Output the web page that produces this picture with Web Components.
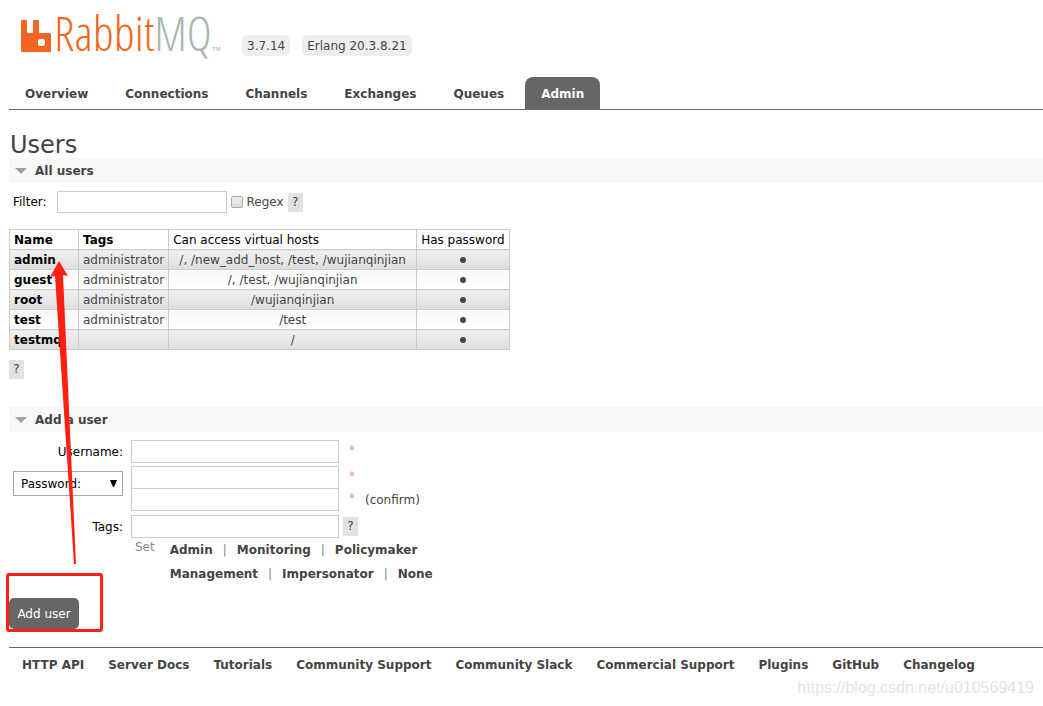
<!DOCTYPE html>
<html lang="en">
<head>
<meta charset="utf-8">
<title>RabbitMQ Management</title>
<style>
  body { margin: 0; background: #fff; color: #444; font: 12px/16px Verdana, "DejaVu Sans", sans-serif; }
</style>
</head>
<body>
<rmq-app>
  <rmq-header slot="header" version="3.7.14" erlang="Erlang 20.3.8.21"></rmq-header>
  <rmq-tabs slot="header" items="Overview,Connections,Channels,Exchanges,Queues,Admin" current="Admin"></rmq-tabs>
  <rmq-section heading="All users"><users-panel></users-panel></rmq-section>
  <rmq-section heading="Add a user"><add-user-form></add-user-form></rmq-section>
  <rmq-footer slot="footer" items="HTTP API,Server Docs,Tutorials,Community Support,Community Slack,Commercial Support,Plugins,GitHub,Changelog"></rmq-footer>
</rmq-app>

<script>
function define(name, render) {
  customElements.define(name, class extends HTMLElement {
    constructor() {
      super();
      this.attachShadow({ mode: 'open' });
    }
    connectedCallback() {
      this.shadowRoot.innerHTML = render(this);
    }
  });
}

define('rmq-app', () => `
  <style>
    :host { display: block; position: relative; padding-left: 9px; }
    h1 { margin: 22px 0 0; padding-left: 1px; font-size: 24px; line-height: 26px; font-weight: normal; }
    .arrow { position: absolute; left: 48px; top: 260px; pointer-events: none; }
    .box { position: absolute; left: 6px; top: 573px; width: 91px; height: 53px; border: 3px solid #ff2012; border-radius: 3px; pointer-events: none; }
    .mark { position: absolute; right: 9px; bottom: 1px; font: 16px/20px "Liberation Sans", Arial, sans-serif; color: #e4e4e4; }
  </style>
  <slot name="header"></slot>
  <main>
    <h1>Users</h1>
    <slot></slot>
  </main>
  <slot name="footer"></slot>
  <svg class="arrow" width="30" height="306" viewBox="0 0 30 306" aria-hidden="true">
    <path fill="#ff2012" d="M11 1 20 16 15 15 28 304 26 304 7 16 2 17Z"/>
  </svg>
  <div class="box"></div>
  <div class="mark">https://blog.csdn.net/u010569419</div>
`);

define('rmq-header', el => `
  <style>
    :host { display: flex; align-items: flex-end; height: 56px; padding-left: 12px; gap: 12px; }
    .logo { display: flex; align-items: flex-end; width: 209px; height: 56px; color: #f36621; text-decoration: none; }
    .logo svg { flex: none; margin: 0 3px 4px 0; }
    .name { font: 300 48px/46px "Open Sans Condensed Light", "Roboto Condensed Light", "Liberation Sans Narrow", "Open Sans Condensed", sans-serif; white-space: nowrap; }
    .mq { color: #a9b5ae; }
    .tm { font: 6px/8px "Liberation Sans", sans-serif; color: #a9b5ae; margin-bottom: 3px; }
    .tag { background: #eee; border-radius: 5px; padding: 3px 5px 2px; line-height: 16px; white-space: nowrap; }
  </style>
  <a class="logo" href="#/">
    <svg width="30" height="32" viewBox="0 0 30 32" aria-hidden="true">
      <path fill="#f36621" fill-rule="evenodd" d="M1 0h4a1 1 0 0 1 1 1v11a1 1 0 0 0 1 1h4a1 1 0 0 0 1-1V1a1 1 0 0 1 1-1h4a1 1 0 0 1 1 1v11a1 1 0 0 0 1 1h10a1 1 0 0 1 1 1v17a1 1 0 0 1-1 1H1a1 1 0 0 1-1-1V1a1 1 0 0 1 1-1ZM19 19a2 2 0 0 0-2 2v3a2 2 0 0 0 2 2h3a2 2 0 0 0 2-2v-3a2 2 0 0 0-2-2Z"/>
    </svg>
    <span class="name">Rabbit<span class="mq">MQ</span></span><span class="tm">TM</span>
  </a>
  <span class="tag">${el.getAttribute('version')}</span>
  <span class="tag">${el.getAttribute('erlang')}</span>
`);

define('rmq-tabs', el => `
  <style>
    :host { display: block; margin-top: 21px; border-bottom: 1px solid #666; }
    nav { display: flex; gap: 5px; }
    a { padding: 9px 16px 7px; line-height: 16px; font-weight: bold; color: #444; text-decoration: none; border-radius: 8px 8px 0 0; }
    a[aria-current] { background: #666; color: #fff; }
  </style>
  <nav>${el.getAttribute('items').split(',').map(t =>
    `<a href="#/${t.toLowerCase()}"${t === el.getAttribute('current') ? ' aria-current="page"' : ''}>${t}</a>`).join('')}</nav>
`);

define('rmq-section', el => `
  <style>
    :host { display: block; }
    h2 { display: flex; align-items: center; gap: 8px; box-sizing: border-box; margin: 0; padding: 1px 6px 0; height: 25px; background: #f8f8f8; font-size: 12px; line-height: 16px; }
  </style>
  <h2><svg width="12" height="6" viewBox="0 0 12 6" aria-hidden="true"><path d="M0 0h12L6 6Z" fill="#a0a0a0"/></svg>${el.getAttribute('heading')}</h2>
  <slot></slot>
`);

define('rmq-help', () => `
  <style>
    :host { display: inline-block; }
    button { display: block; margin: 0; border: 0; padding: 0; width: 15px; height: 19px; background: #e2e2e2; color: #444; font: inherit; line-height: 19px; text-align: center; }
  </style>
  <button type="button" aria-label="Help">?</button>
`);

const users = [
  ['admin', 'administrator', '/, /new_add_host, /test, /wujianqinjian'],
  ['guest', 'administrator', '/, /test, /wujianqinjian'],
  ['root', 'administrator', '/wujianqinjian'],
  ['test', 'administrator', '/test'],
  ['testmq', '', '/']
];

define('users-panel', () => `
  <style>
    :host { display: block; padding: 8px 0 28px; }
    .filter { display: flex; align-items: center; height: 22px; padding-left: 4px; }
    .filter label:first-child { color: #000; margin-right: 10px; }
    input { margin: 0; box-sizing: border-box; }
    input[type=text] { width: 170px; height: 22px; border: 1px solid #ccc; padding: 2px; font: inherit; }
    input[type=checkbox] { appearance: none; width: 12px; height: 12px; margin: 0 4px; border: 1px solid #a8a8a8; border-radius: 2px; background: linear-gradient(#eee, #ddd); }
    .filter rmq-help { margin-left: 4px; }
    table { border-collapse: collapse; margin: 16px 0 10px; }
    th, td { border: 1px solid #ccc; padding: 2px 4px 1px; height: 16px; line-height: 16px; text-align: center; white-space: nowrap; }
    thead th { color: #000; font-weight: normal; text-align: left; }
    th.b, tbody th { font-weight: bold; color: #000; text-align: left; }
    td.l { text-align: left; }
    .name { width: 60px; }
    .hosts { width: 239px; }
    .pass { width: 84px; }
    tbody tr:nth-child(odd) > * { background: linear-gradient(#f0f0f0, #dedede); }
    tbody tr:nth-child(even) > * { background: linear-gradient(#f8f8f8, #fff); }
    i { display: block; width: 6px; height: 6px; border-radius: 3px; background: #444; margin: 0 auto; }
  </style>
  <div class="filter">
    <label for="f">Filter:</label><input type="text" id="f">
    <input type="checkbox" id="r"><label for="r">Regex</label><rmq-help></rmq-help>
  </div>
  <table>
    <thead><tr><th class="b name">Name</th><th class="b">Tags</th><th class="hosts">Can access virtual hosts</th><th class="pass">Has password</th></tr></thead>
    <tbody>${users.map(u => `<tr><th scope="row">${u[0]}</th><td class="l">${u[1]}</td><td>${u[2]}</td><td><i role="img" aria-label="yes"></i></td></tr>`).join('')}</tbody>
  </table>
  <rmq-help></rmq-help>
`);

define('add-user-form', () => `
  <style>
    :host { display: block; padding: 8px 0 18px; }
    .grid { display: grid; grid-template-columns: 110px auto; justify-content: start; column-gap: 8px; row-gap: 3px; padding-left: 4px; }
    .label { height: 23px; color: #000; text-align: right; line-height: 25px; white-space: nowrap; }
    .row { display: flex; align-items: center; height: 23px; }
    .row + .row { margin-top: -1px; }
    input { box-sizing: border-box; width: 208px; height: 23px; margin: 0; border: 1px solid #ccc; padding: 2px; font: inherit; }
    .req { color: #f88; margin: -4px 10px 0; line-height: 16px; }
    .pick { position: relative; padding-top: 5px; }
    select { display: block; appearance: none; box-sizing: border-box; width: 110px; height: 25px; border: 1px solid #a8a8a8; border-radius: 0; padding: 0 7px; background: #fff; color: #000; font: inherit; }
    .pick svg { position: absolute; right: 6px; top: 14px; pointer-events: none; }
    rmq-help { margin-left: 4px; }
    .tagsrow { margin-top: 1px; }
    .set { display: flex; gap: 15px; padding-left: 4px; color: #888; line-height: 18px; }
    .set a { font-weight: bold; color: #444; text-decoration: none; }
    .set section div { display: flex; gap: 10px; line-height: 24px; }
    .add { display: block; margin: 12px 0 0; border: 0; border-radius: 5px; height: 31px; width: 70px; padding: 0; background: #666; color: #fff; font: inherit; }
  </style>
  <form>
    <div class="grid">
      <label class="label" for="u">Username:</label>
      <div class="row"><input type="text" id="u"><span class="req">*</span></div>
      <div class="pick">
        <select aria-label="Credential type"><option>Password:</option></select>
        <svg width="7" height="7" viewBox="0 0 7 7" aria-hidden="true"><path d="M0 0h7L4 7H3Z" fill="#000"/></svg>
      </div>
      <div>
        <div class="row"><input type="password" aria-label="Password"><span class="req">*</span></div>
        <div class="row"><input type="password" id="c"><span class="req">*</span><label for="c">(confirm)</label></div>
      </div>
      <label class="label tagsrow" for="t">Tags:</label>
      <div>
        <div class="row tagsrow"><input type="text" id="t"><rmq-help></rmq-help></div>
        <div class="set"><span>Set</span>
          <section>
            <div><a href="#admin">Admin</a>|<a href="#monitoring">Monitoring</a>|<a href="#policymaker">Policymaker</a></div>
            <div><a href="#management">Management</a>|<a href="#impersonator">Impersonator</a>|<a href="#none">None</a></div>
          </section>
        </div>
      </div>
    </div>
    <button class="add" type="button">Add user</button>
  </form>
`);

define('rmq-footer', el => `
  <style>
    :host { display: block; border-top: 1px solid #666; }
    nav { display: flex; gap: 24px; padding: 9px 13px 26px; }
    a { font-weight: bold; color: #444; text-decoration: none; white-space: nowrap; }
  </style>
  <nav>${el.getAttribute('items').split(',').map(t => `<a href="#">${t}</a>`).join('')}</nav>
`);
</script>
</body>
</html>
